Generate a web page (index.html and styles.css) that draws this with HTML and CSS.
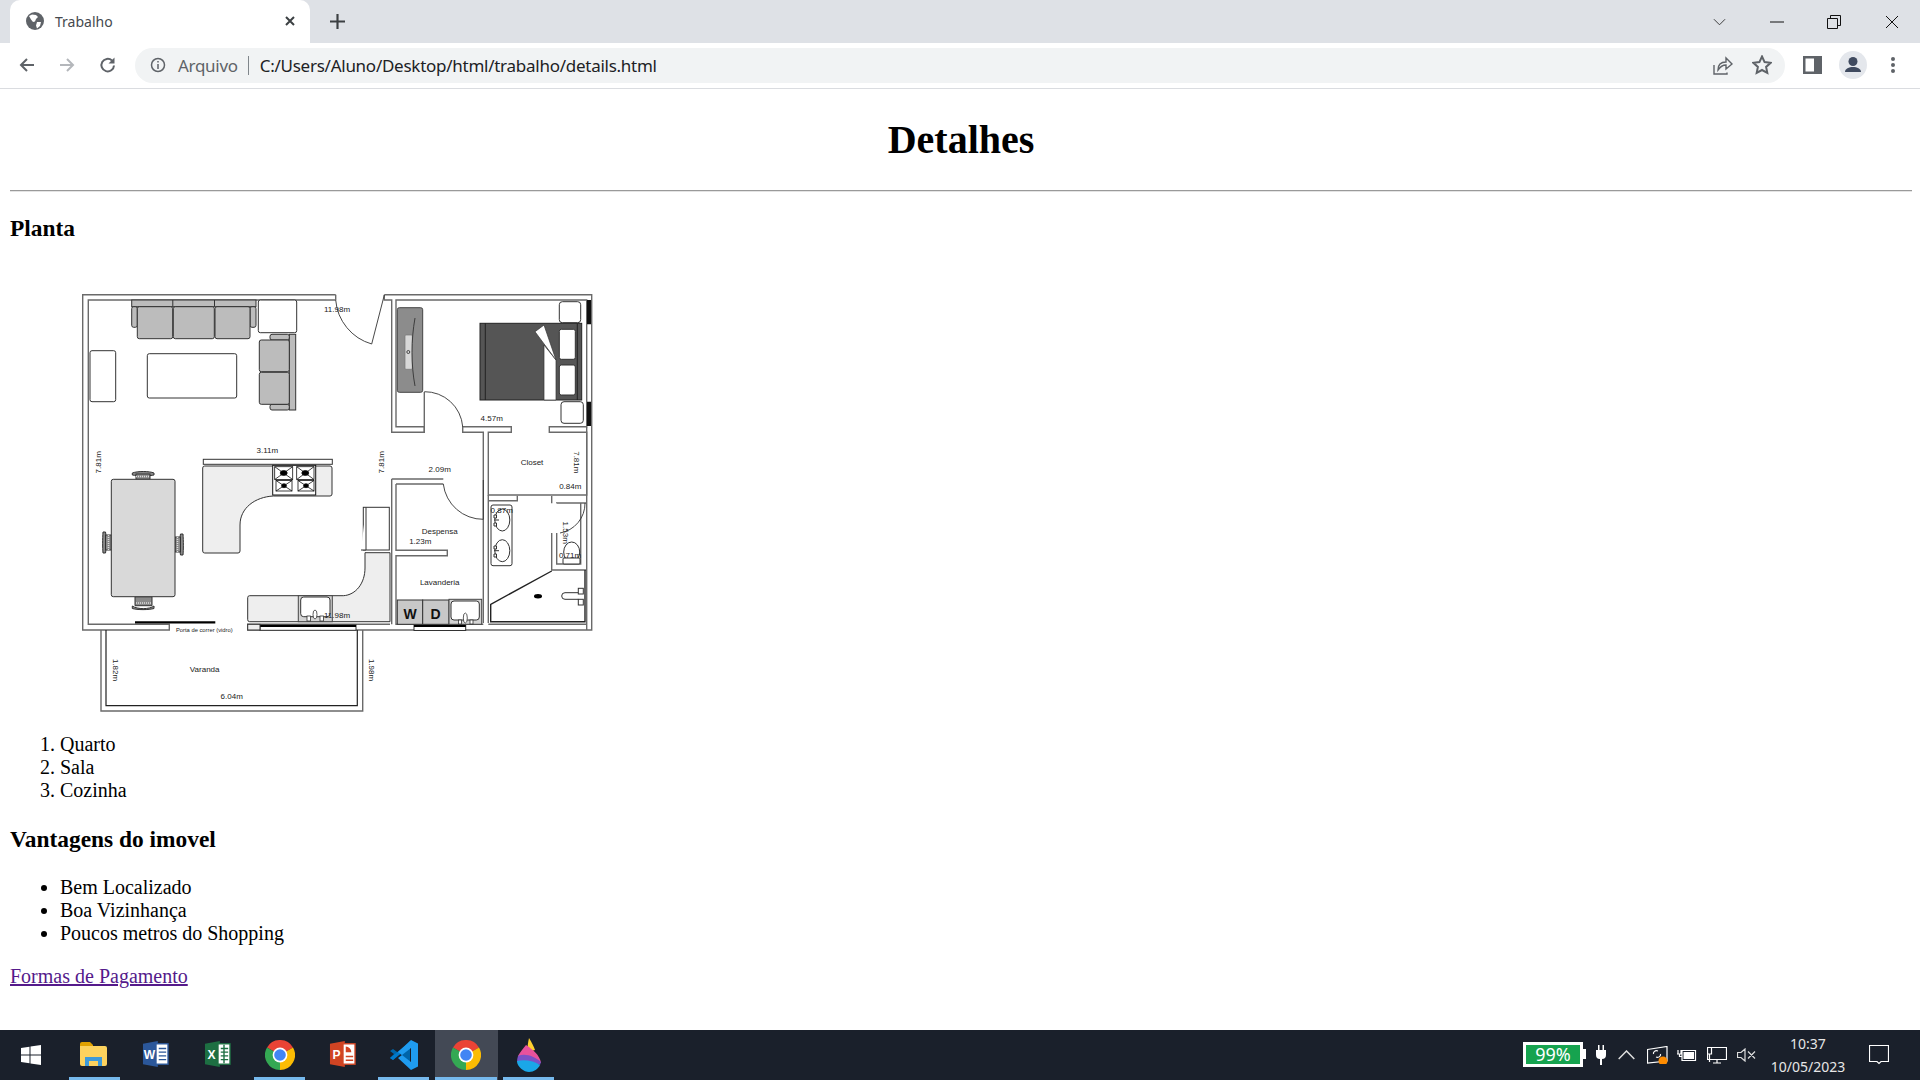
FILE: index.html
```html
<!DOCTYPE html>
<html lang="pt">
<head>
<meta charset="utf-8">
<title>Trabalho</title>
<link rel="stylesheet" href="styles.css">
</head>
<body>
<svg class="defs" width="0" height="0" aria-hidden="true">
  <symbol id="chrome" viewBox="0 0 30 30">
    <path fill="#ea4335" d="M15 15L2 7.5A15 15 0 0 1 28 7.5Z"/>
    <path fill="#fbbc04" d="M15 15L28 7.5A15 15 0 0 1 15 30Z"/>
    <path fill="#34a853" d="M15 15L15 30A15 15 0 0 1 2 7.5Z"/>
    <circle cx="15" cy="15" r="7.4" fill="#fff"/>
    <circle cx="15" cy="15" r="5.8" fill="#4285f4"/>
  </symbol>
</svg>

<header class="chrome">
  <div class="tabstrip">
    <div class="tab">
      <svg class="globe" viewBox="0 0 18 18"><circle cx="9" cy="9" r="9" fill="#5f6368"/><path fill="#fff" d="M3 4l3-1.5 4 .5 2 2-2 2-1 2.500-2 .5L5 7.500zM11 10h4l-1 4-3 2.500-1-3z"/></svg>
      <span class="tab-title">Trabalho</span>
      <svg class="tab-close" viewBox="0 0 12 12"><path d="M2 2l8 8M10 2l-8 8"/></svg>
    </div>
    <svg class="newtab" viewBox="0 0 14 14"><path d="M7 0v14M0 7h14"/></svg>
    <div class="winctl">
      <svg class="wc wc-chev" viewBox="0 0 14 8"><path d="M1 1l6 6 6-6"/></svg>
      <svg class="wc wc-min" viewBox="0 0 14 14"><path d="M0 7h14"/></svg>
      <svg class="wc wc-max" viewBox="0 0 14 14"><path d="M.5 3.500h10v10H.5zM3.500 3.500V.5h10v10h-3"/></svg>
      <svg class="wc wc-close" viewBox="0 0 14 14"><path d="M1 1l12 12M13 1L1 13"/></svg>
    </div>
  </div>
  <div class="toolbar">
    <svg class="nav nav-back" viewBox="0 0 18 18"><path d="M16 9H3M9 3L3 9l6 6"/></svg>
    <svg class="nav nav-fwd" viewBox="0 0 18 18"><path d="M2 9h13M9 3l6 6-6 6"/></svg>
    <svg class="nav nav-reload" viewBox="0 0 18 18"><path d="M15 9.500A6.300 6.300 0 1 1 13 4.500"/><path class="solid" d="M15.500 1.500v6h-6z"/></svg>
    <div class="omnibox">
      <svg class="info" viewBox="0 0 16 16"><circle cx="8" cy="8" r="6.500"/><path d="M8 7v5M8 4v1.600"/></svg>
      <span class="scheme">Arquivo</span>
      <span class="sep"></span>
      <span class="url">C:/Users/Aluno/Desktop/html/trabalho/details.html</span>
      <svg class="omni-act act-share" viewBox="0 0 20 20"><path d="M1 10v9h13v-1.500M5 15c0-5 3-8 8-8V3l6 6-6 5v-4c-3 0-6 2-8 5z"/></svg>
      <svg class="omni-act act-star" viewBox="0 0 20 20"><path d="M10 1.500l2.600 5.600 6 .7-4.500 4.100 1.200 6L10 15l-5.300 2.900 1.200-6L1.400 7.800l6-.7z"/></svg>
    </div>
    <svg class="panel" viewBox="0 0 19 18"><rect width="19" height="18" fill="#5f6368"/><rect x="2.500" y="2.500" width="8.500" height="13" fill="#fff"/></svg>
    <svg class="avatar" viewBox="0 0 28 28"><circle cx="14" cy="14" r="14" fill="#e4e7ec"/><circle cx="14" cy="10.500" r="4.500" fill="#3f4a5f"/><path fill="#3f4a5f" d="M6 21c0-3.500 4-5 8-5s8 1.500 8 5z"/></svg>
    <svg class="menu" viewBox="0 0 6 18"><circle cx="3" cy="3" r="2"/><circle cx="3" cy="9" r="2"/><circle cx="3" cy="15" r="2"/></svg>
  </div>
</header>

<main class="page">
  <h1>Detalhes</h1>
  <hr>
  <h3>Planta</h3>
  <svg class="plan" viewBox="10 265 620 448" role="img" aria-label="Planta do apartamento">
    <!-- walls -->
    <g class="wall">
      <path d="M335.700 294.700H82.700V630H169.300V624.300H88.300V300H335.700"/>
      <path d="M335.700 294.700V300"/>
      <path d="M384.300 294.700H591.700V630H247.700V624.300H390"/>
      <path d="M384.300 294.700V300H391.700V432.300H424.300V426.700H396V300H586.700V426.700H549.300V432.300H586.700V495H488.300V432.300H511.300V426.700H462.700V432.300H483.300V623"/>
      <path d="M424.300 392V432.300"/>
      <path d="M391.700 479H443.300M396 484H443.300M391.700 479V624.300M396 484V550.300H447.300V555.700H396V624.300H483.300"/>
      <path d="M488.300 495V500.700H517.300V495.700M488.300 500.700V623M488.300 624.300H586"/>
      <path d="M586.700 495V503H556.700V503.300M586.700 503V570M551.700 496V503.300M551.700 533V570H586M586.700 426.700V630"/>
      <path d="M556.700 533V564H580.700V503"/>
    </g>
    <path class="thin" d="M384.300 295L371.700 344A50 50 0 0 1 335.700 300"/>
    <path class="thin" d="M424.300 391.700A38 38 0 0 1 462.700 426.700"/>
    <path class="thin" d="M443.300 484A40 40 0 0 0 483.300 519.300V480"/>
    <path class="thin" d="M585 503A30 30 0 0 1 560 533"/>

    <!-- balcony -->
    <g class="wall">
      <path d="M101 630V711H362.700V630"/>
    </g>
    <path class="black" d="M106 630V705.700H357.300V630"/>
    <path class="black thick" d="M135 622.300H215.300"/>
    <rect class="black-box" x="260" y="624.800" width="96" height="5.500"/>
    <path class="black thick" d="M260 626H356"/>
    <rect class="black-box" x="414" y="625" width="51.700" height="5.500"/>
    <path class="black thick" d="M414 626H465.700"/>
    <path class="wall-solid" d="M587 300h4v24.300h-4zM587 401.700h4V426h-4z"/>

    <!-- sofa -->
    <g class="furn grey">
      <rect x="131.700" y="300" width="124.300" height="6.700"/>
      <path d="M172.800 300v6.700M214.500 300v6.700"/>
      <rect x="131.700" y="306.700" width="5.600" height="20.600" rx="2"/>
      <rect x="250" y="306.700" width="6" height="20.600" rx="2"/>
      <rect x="137.300" y="306.700" width="35.400" height="32" rx="2"/>
      <rect x="173.300" y="306.700" width="41" height="32" rx="2"/>
      <rect x="215" y="306.700" width="35" height="32" rx="2"/>
      <rect x="289.300" y="334.300" width="6.400" height="75.700"/>
      <rect x="270" y="334.300" width="19.300" height="5.700" rx="2"/>
      <rect x="270" y="404.300" width="19.300" height="5.700" rx="2"/>
      <rect x="259.300" y="340" width="30" height="31.700" rx="2"/>
      <rect x="259.300" y="372.300" width="30" height="32" rx="2"/>
    </g>
    <g class="furn white">
      <rect x="258.300" y="300" width="38.400" height="32.700" rx="2"/>
      <rect x="90" y="350.700" width="25.700" height="51" rx="2"/>
      <rect x="147.300" y="353.700" width="89.400" height="44.300" rx="2"/>
      <rect x="559.300" y="301.700" width="21.400" height="21" rx="3"/>
      <rect x="561" y="401.700" width="22.300" height="21.600" rx="3"/>
    </g>

    <!-- kitchen -->
    <rect class="furn white" x="203.300" y="459.300" width="129" height="5"/>
    <path class="furn light" d="M204.700 466H330a2 2 0 0 1 2 2V494a2 2 0 0 1-2 2H273.300C255 497 240 508 240 525V551a2 2 0 0 1-2 2H204.700a2 2 0 0 1-2-2V468a2 2 0 0 1 2-2Z"/>
    <rect class="stove" x="272.700" y="465.300" width="43" height="29.700"/>
    <g class="burner">
      <rect x="274.700" y="466.700" width="18" height="12.800"/><path d="M274.700 466.700l18 12.800M292.700 466.700l-18 12.800"/><ellipse cx="283.700" cy="473" rx="3.500" ry="2.500"/>
      <rect x="296.700" y="466.700" width="17.300" height="12.800"/><path d="M296.700 466.700l17.300 12.800M314 466.700l-17.300 12.800"/><ellipse cx="305.300" cy="473" rx="3.500" ry="2.500"/>
      <rect x="276" y="480.500" width="16" height="10.500"/><path d="M276 480.500l16 10.500M292 480.500l-16 10.500"/><ellipse cx="284" cy="485.700" rx="2.500" ry="2"/>
      <rect x="298" y="480.500" width="16" height="10.500"/><path d="M298 480.500l16 10.500M314 480.500l-16 10.500"/><ellipse cx="306" cy="485.700" rx="2.500" ry="2"/>
    </g>
    <path class="furn light" d="M249.700 595.700H343.300C356 595 365 583 365 568V552.700H390V621.700H249.700a2 2 0 0 1-2-2V597.700a2 2 0 0 1 2-2Z"/>
    <rect class="furn light" x="247.700" y="624.300" width="12.300" height="5.700"/>
    <rect class="sink" x="298.300" y="595.700" width="34" height="26"/>
    <rect class="furn white" x="300.700" y="597" width="29.300" height="19.700" rx="3"/>
    <g class="fixture">
      <rect x="307" y="616" width="3.500" height="5"/><rect x="320" y="616" width="3.500" height="5"/>
      <ellipse cx="315" cy="614.500" rx="2" ry="4.500"/>
    </g>
    <g class="furn white">
      <rect x="363.300" y="507.300" width="26" height="42.700"/>
      <path d="M366 507.300V550H361"/>
    </g>

    <!-- table -->
    <g class="furn grey2">
      <path d="M132.300 473c5-2 17-2 21.700 0v2c-4 1-17 1-21.700 0Z"/>
      <rect x="136" y="474" width="14" height="5.300"/>
      <path d="M132.300 606c5 3.500 17 3.500 21.700 0v2.500c-5 1.500-17 1.500-21.700 0Z"/>
      <path d="M135 596.700h17v9h-17Z"/>
      <path d="M103 532c-.5 7-.5 16 0 21h2.500c1-5 1-16 0-21Z"/>
      <rect x="105.500" y="535" width="5.800" height="15"/>
      <path d="M183 534c.5 7 .5 16 0 21h-2.500c-1-5-1-16 0-21Z"/>
      <rect x="175" y="537" width="5.500" height="15"/>
    </g>
    <g class="stripes">
      <path d="M136 476.500H150M136 603H151M108.500 535V550M177.500 537V552"/>
    </g>
    <rect class="furn table" x="111.300" y="479.300" width="63.700" height="117.400" rx="2"/>

    <!-- bedroom -->
    <rect class="bed" x="480" y="323.300" width="101.700" height="76.700"/>
    <path class="bed-edge" d="M485.300 323.300V400M577.300 323.300V400"/>
    <path class="sheet" d="M544 400H556V360L544 345Z"/>
    <path class="sheet" d="M535 331.700L544 325L556 360Z"/>
    <g class="furn white">
      <rect x="559.300" y="329.300" width="16" height="30" rx="2"/>
      <rect x="559.300" y="365" width="16" height="30" rx="2"/>
    </g>
    <rect class="cabinet" x="397.300" y="307.700" width="25.400" height="84.600" rx="2"/>
    <rect class="tv" x="405" y="335" width="7.300" height="34.300" rx="1"/>
    <path class="thin" d="M415 318C411 340 411 365 415 386"/>
    <circle class="thin" cx="408.300" cy="352" r="1.500"/>

    <!-- laundry -->
    <rect class="appliance" x="397.300" y="600" width="25.400" height="24.300"/>
    <rect class="appliance" x="422.700" y="600" width="26.300" height="24.300"/>
    <text class="wd" x="410" y="618.500">W</text>
    <text class="wd" x="435.500" y="618.500">D</text>
    <rect class="sink" x="449" y="599.300" width="32.700" height="25"/>
    <rect class="furn white" x="451" y="601" width="28.300" height="19" rx="3"/>
    <g class="fixture">
      <rect x="458.500" y="620" width="3" height="4"/><rect x="470" y="620" width="3" height="4"/>
      <ellipse cx="465.300" cy="618" rx="2" ry="5"/>
    </g>

    <!-- bath -->
    <rect class="furn white" x="491" y="505" width="21" height="60.700" rx="2"/>
    <g class="furn white">
      <ellipse cx="502.300" cy="520" rx="7.500" ry="11"/>
      <ellipse cx="502.300" cy="550.700" rx="7.500" ry="11"/>
      <path d="M494 520h5M494 550.700h5M494 515h2.500v3h-2.500zM494 523h2.500v3h-2.500zM494 546h2.500v3h-2.500zM494 554h2.500v3h-2.500z"/>
    </g>
    <g class="furn white">
      <ellipse cx="571.700" cy="552" rx="8" ry="10"/>
      <rect x="563" y="558" width="17" height="6" rx="1"/>
    </g>
    <path class="shower" d="M551.700 571L490.700 604.300V621.700H585V570"/>
    <ellipse class="drain" cx="538" cy="596.300" rx="4" ry="2.200"/>
    <g class="furn white">
      <path d="M578.300 592.700H565a3.300 3.300 0 0 0 0 6.600H578.300"/>
      <rect x="578.300" y="588.300" width="5" height="5.700"/>
      <rect x="578.300" y="599.300" width="5" height="5.700"/>
    </g>

    <!-- labels -->
    <g class="label">
      <text x="337" y="312">11.98m</text>
      <text x="267.300" y="453">3.11m</text>
      <text x="491.700" y="420.500">4.57m</text>
      <text x="439.700" y="472">2.09m</text>
      <text x="532" y="465">Closet</text>
      <text x="570.300" y="489">0.84m</text>
      <text x="501.700" y="513">0.87m</text>
      <text x="570" y="558">0.71m</text>
      <text x="439.700" y="534">Despensa</text>
      <text x="420.300" y="544">1.23m</text>
      <text x="439.700" y="585">Lavanderia</text>
      <text x="337" y="618">11.98m</text>
      <text x="204.700" y="672">Varanda</text>
      <text x="231.700" y="699">6.04m</text>
      <text class="tiny" x="204.300" y="631.500">Porta de correr (vidro)</text>
      <text transform="rotate(-90 98.300 462.300)" x="98.300" y="465">7.81m</text>
      <text transform="rotate(-90 381.700 462.300)" x="381.700" y="465">7.81m</text>
      <text transform="rotate(90 576.700 462.300)" x="576.700" y="465">7.81m</text>
      <text transform="rotate(90 115 670)" x="115" y="672.500">1.82m</text>
      <text transform="rotate(90 371 670)" x="371" y="672.500">1.98m</text>
      <text transform="rotate(90 565.700 532.700)" x="565.700" y="535">1.53m</text>
    </g>
  </svg>

  <ol>
    <li>Quarto</li>
    <li>Sala</li>
    <li>Cozinha</li>
  </ol>
  <h3>Vantagens do imovel</h3>
  <ul>
    <li>Bem Localizado</li>
    <li>Boa Vizinhança</li>
    <li>Poucos metros do Shopping</li>
  </ul>
  <p><a href="#pagamento">Formas de Pagamento</a></p>
</main>

<footer class="taskbar">
  <div class="task">
    <svg class="ic ic-win" viewBox="0 0 20 20"><path fill="#fff" d="M0 3l8.500-1.200v7.700H0zM9.500 1.600L20 0v9.500H9.500zM0 10.500h8.500v7.700L0 17zM9.500 10.500H20V20L9.500 18.400z"/></svg>
  </div>
  <div class="task open split">
    <svg class="ic ic-27" viewBox="0 0 27 24"><path fill="#e0a100" d="M0 2a2 2 0 0 1 2-2h8l3 3v4H0z"/><path fill="#fcd25e" d="M0 4h25a2 2 0 0 1 2 2v16a2 2 0 0 1-2 2H2a2 2 0 0 1-2-2z"/><path fill="#3d9ad9" d="M5 24v-9h17v9h-4v-5H9v5z"/></svg>
  </div>
  <div class="task">
    <svg class="ic ic-27" viewBox="0 0 27 28"><path fill="#2b579a" d="M0 3l16-3v28L0 25z"/><rect x="14" y="3" width="13" height="22" fill="#fff" stroke="#2b579a" stroke-width="1.500"/><path stroke="#2b579a" stroke-width="1.500" d="M17 8h8M17 12h8M17 16h8M17 20h8"/><text class="ic-letter" x="7" y="19">W</text></svg>
  </div>
  <div class="task">
    <svg class="ic ic-27" viewBox="0 0 27 28"><path fill="#1d6f42" d="M0 3l16-3v28L0 25z"/><rect x="14" y="3" width="13" height="22" fill="#fff" stroke="#1d6f42" stroke-width="1.500"/><path stroke="#1d6f42" stroke-width="1.500" d="M17 8h8M17 12h8M17 16h8M17 20h8M20.500 4v20"/><text class="ic-letter" x="7" y="19">X</text></svg>
  </div>
  <div class="task open">
    <svg class="ic ic-30"><use href="#chrome"/></svg>
  </div>
  <div class="task">
    <svg class="ic ic-27" viewBox="0 0 27 28"><path fill="#d04423" d="M0 3l16-3v28L0 25z"/><rect x="14" y="3" width="13" height="22" fill="#fff" stroke="#d04423" stroke-width="1.500"/><path fill="#d04423" d="M17 6a6 6 0 0 1 6 6h-6zM17 16h8v1.500h-8zM17 20h8v1.500h-8z"/><text class="ic-letter" x="7" y="19">P</text></svg>
  </div>
  <div class="task open">
    <svg class="ic ic-30" viewBox="0 0 30 30"><path fill="#0065a9" d="M1 11l3-2 7 5 -7 6 -3-2 4-4zM21 1l-10 13 10 8z"/><path fill="#007acc" d="M1 18l3 2L22 5V1z"/><path fill="#1f9cf0" d="M22 0l7 3.500v23L22 30l-13-12 4-3 9 7V8l-9 7-4-3z"/></svg>
  </div>
  <div class="task open active">
    <svg class="ic ic-30"><use href="#chrome"/></svg>
  </div>
  <div class="task open">
    <svg class="ic ic-drop" viewBox="0 0 24 34"><path fill="#ffd02f" d="M12 0c3 5 5 9 6 12l-7 2c-1-5 0-9 1-14z"/><path fill="#e8529c" d="M9 7c6 4 14 10 15 18L1 18c2-4 5-7 8-11z"/><path fill="#7a52c7" d="M1 18c7-3 16 0 23 6l-1 3C15 23 7 23 0 24c0-2 .4-4 1-6z"/><path fill="#1aa7e8" d="M0 23c8-2 17 0 23 4-2 4-6 7-11 7S0 29 0 23z"/></svg>
  </div>
  <div class="tray">
    <div class="battery"><span class="batt-fill">99%</span></div>
    <span class="batt-nub"></span>
    <svg class="tr tr-plug" viewBox="0 0 10 20"><path fill="#fff" d="M2 0h1.500v5H6.500V0H8v5h2v5a4 4 0 0 1-4 4v6H4v-6a4 4 0 0 1-4-4V5h2z"/></svg>
    <svg class="tr tr-chev" viewBox="0 0 17 10"><path d="M.7 9l7.800-8 7.800 8"/></svg>
    <svg class="tr tr-mon" viewBox="0 0 21 18"><path d="M.5 3.500L20 .5V15L.5 17z"/><path d="M11 5c-3-1-5 1-4.500 3M9 11c3 1 5-1 4.500-3"/><circle class="dot" cx="16" cy="15" r="4.500"/></svg>
    <svg class="tr tr-batt" viewBox="0 0 20 14"><path d="M1 2v4M4 2v4M0 6h5M2.500 6v2.500h2M5 2.500h13.500v10H5z"/><rect class="solid" x="6.500" y="4" width="10.500" height="7"/></svg>
    <svg class="tr tr-net" viewBox="0 0 20 17"><path d="M.5 .5H19.500V12.500H.5zM10 12.500V16M6 16h8"/><rect class="bg" x="0" y="0" width="5" height="7"/><path d="M.5 .5h4v6.500h-4zM2.500 7v8"/></svg>
    <svg class="tr tr-mute" viewBox="0 0 19 14"><path d="M.5 4.500H4L8 1V13L4 9.500H.5zM11 3.500l7 7M18 3.500l-7 7"/></svg>
    <div class="clock"><span>10:37</span><span>10/05/2023</span></div>
    <svg class="tr tr-note" viewBox="0 0 20 20"><path d="M.5 .5H19.500V16.500H12L10 18.500 8 16.500H.5z"/></svg>
  </div>
</footer>
</body>
</html>
```

FILE: styles.css
```css
* { box-sizing: border-box; }
html, body { height: 100%; }
body {
  margin: 0;
  display: flex;
  flex-direction: column;
  height: 1080px;
  overflow: hidden;
  background: #fff;
  color: #000;
  font-family: "Liberation Serif", serif;
  font-size: 20px;
}
.defs { position: absolute; }

/* browser chrome */
.chrome { flex: none; font-family: "Noto Sans", sans-serif; }
.tabstrip {
  height: 43px;
  background: #dee1e6;
  display: flex;
  align-items: center;
  padding-left: 10px;
}
.tab {
  width: 300px;
  height: 43px;
  background: #fff;
  border-radius: 10px 10px 0 0;
  display: flex;
  align-items: center;
  padding: 0 14px 1px 16px;
}
.globe { width: 18px; height: 18px; flex: none; }
.tab-title { margin-left: 11px; font-size: 14px; color: #45494e; flex: 1; }
.tab-close { width: 12px; height: 12px; fill: none; stroke: #3c4043; stroke-width: 2; }
.newtab { width: 15px; height: 15px; margin-left: 20px; fill: none; stroke: #3c4043; stroke-width: 2; }
.winctl { margin-left: auto; display: flex; align-items: center; }
.wc { fill: none; stroke: #111; stroke-width: 1; }
.wc-chev { width: 13px; height: 8px; margin-right: 44px; stroke: #333; }
.wc-min { width: 14px; height: 14px; margin-right: 43px; }
.wc-max { width: 14px; height: 14px; margin-right: 44px; stroke: #111; }
.wc-close { width: 14px; height: 14px; margin-right: 21px; }

.toolbar {
  height: 46px;
  border-bottom: 1px solid #dadce0;
  background: #fff;
  display: flex;
  align-items: center;
  padding: 0 0 1px 18px;
}
.nav { width: 18px; height: 18px; fill: none; stroke-width: 2; flex: none; }
.nav-back { stroke: #5f6368; }
.nav-fwd { stroke: #b4b7bb; margin-left: 22px; }
.nav-reload { stroke: #5f6368; margin-left: 23px; }
.nav-reload .solid { fill: #5f6368; stroke: none; }
.omnibox {
  margin-left: 18px;
  width: 1650px;
  height: 35px;
  background: #f1f3f4;
  border-radius: 18px;
  display: flex;
  align-items: center;
  padding: 0 13px 0 15px;
}
.info { width: 16px; height: 16px; fill: none; stroke: #5f6368; stroke-width: 1.5; flex: none; }
.scheme { margin-left: 12px; font-size: 17px; color: #5f6368; letter-spacing: -.3px; }
.sep { width: 1px; height: 19px; background: #80868b; margin: 0 11px 0 10px; }
.url { font-size: 17px; color: #202124; flex: 1; letter-spacing: -.26px; }
.omni-act { width: 20px; height: 20px; fill: none; stroke: #5f6368; stroke-width: 1.400; flex: none; }
.act-star { margin-left: 19px; stroke-width: 2; }
.panel { width: 19px; height: 18px; margin-left: 18px; flex: none; }
.avatar { width: 28px; height: 28px; margin-left: 17px; flex: none; }
.menu { width: 6px; height: 18px; margin-left: 23px; fill: #5f6368; flex: none; }

/* document */
.page {
  flex: 1;
  min-height: 0;
  overflow: hidden;
  padding: 0 8px 0 10px;
}
h1 { font-size: 40px; margin: 27.800px 0 26.800px; text-align: center; line-height: 46px; }
hr {
  margin: 0;
  height: 2px;
  border: 0;
  border-top: 1px solid #9a9a9a;
  border-bottom: 1px solid #e4e4e4;
}
h3 { font-size: 23.400px; margin: 23.400px 0; line-height: 27px; }
.plan { display: block; width: 620px; height: 448px; }
ol, ul { margin: 20px 0; padding-left: 50px; line-height: 23px; }
p { margin: 20px 0; line-height: 23px; }
a { color: #551a8b; }

/* floor plan */
.wall { fill: none; stroke: #6a6a6a; stroke-width: 1.400; }
.thin { fill: none; stroke: #333; stroke-width: .9; }
.black { fill: none; stroke: #222; stroke-width: 1.200; }
.thick { stroke: #000; stroke-width: 2.200; }
.black-box { fill: #fff; stroke: #333; stroke-width: 1; }
.wall-solid { fill: #111; }
.furn { stroke: #333; stroke-width: 1; }
.grey { fill: #bcbcbc; }
.grey2 { fill: #8a8a8a; }
.white { fill: #fff; }
.light { fill: #eeeeee; }
.table { fill: #d9d9d9; }
.stripes { fill: none; stroke: #ddd; stroke-width: 1.500; stroke-dasharray: 1 1; }
.stove { fill: #fff; stroke: #111; stroke-width: 1; }
.burner { fill: #fff; stroke: #111; stroke-width: .8; }
.burner ellipse { fill: #000; }
.sink { fill: #d4d4d4; stroke: #444; stroke-width: 1; }
.fixture { fill: #fff; stroke: #333; stroke-width: .8; }
.bed { fill: #555; stroke: #222; stroke-width: 1; }
.bed-edge { fill: none; stroke: #222; stroke-width: 1; }
.sheet { fill: #fff; stroke: #333; stroke-width: .7; }
.cabinet { fill: #8c8c8c; stroke: #444; stroke-width: 1; }
.tv { fill: #d8d8d8; stroke: #777; stroke-width: .7; }
.appliance { fill: #c8c8c8; stroke: #333; stroke-width: 1; }
.wd { font: bold 14px "Liberation Sans", sans-serif; text-anchor: middle; fill: #111; }
.shower { fill: none; stroke: #222; stroke-width: 1.400; }
.drain { fill: #000; }
.label text {
  font: 8px "Liberation Sans", sans-serif;
  text-anchor: middle;
  fill: #222;
}
.label .tiny { font-size: 5.800px; }

/* taskbar */
.taskbar {
  flex: none;
  height: 50px;
  background: #1a202b;
  display: flex;
  font-family: "Noto Sans", sans-serif;
}
.task {
  width: 62.200px;
  height: 50px;
  position: relative;
  display: flex;
  align-items: center;
  justify-content: center;
}
.task.open::after {
  content: "";
  position: absolute;
  left: 5px;
  right: 6px;
  bottom: 0;
  height: 3px;
  background: #76b9ed;
}
.task.split::after { left: 7px; right: 4px; box-shadow: none; }
.task.active { background: #434955; }
.task.active::after { left: 0; right: 1px; }
.ic { display: block; overflow: visible; }
.ic-win { width: 20px; height: 20px; }
.ic-27 { width: 27px; height: 26px; margin-bottom: 2px; }
.ic-30 { width: 30px; height: 30px; }
.ic-drop { width: 24px; height: 34px; }
.ic-letter { font: bold 13px "Liberation Sans", sans-serif; fill: #fff; text-anchor: middle; }

.tray { margin-left: auto; display: flex; align-items: center; color: #fff; }
.battery {
  width: 60px;
  height: 25px;
  border: 3px solid #fff;
  background: #16a34f;
  display: flex;
  align-items: center;
  justify-content: center;
  margin-bottom: 2px;
}
.batt-fill { font-size: 18px; line-height: 1; color: #fff; }
.batt-nub { width: 3px; height: 10px; background: #fff; margin: 0 10px 2px 0; }
.tr { fill: none; stroke: #fff; stroke-width: 1.200; flex: none; }
.tr-plug { width: 10px; height: 20px; stroke: none; margin-right: 12px; }
.tr-chev { width: 17px; height: 10px; stroke: #ddd; stroke-width: 1.500; margin-right: 12px; }
.tr-mon { width: 21px; height: 18px; margin-right: 9px; }
.tr-mon .dot { fill: #ff8c00; stroke: none; }
.tr-batt { width: 20px; height: 14px; margin-right: 10px; }
.tr-batt .solid { fill: #fff; stroke: none; }
.tr-net { width: 20px; height: 17px; margin-right: 10px; }
.tr-net .bg { fill: #1a202b; stroke: none; }
.tr-mute { width: 19px; height: 14px; margin-right: 15px; stroke: #ddd; }
.clock {
  display: flex;
  flex-direction: column;
  align-items: center;
  font-size: 14px;
  line-height: 23px;
  color: #e6e6e6;
  width: 74px;
  margin-right: 24px;
}
.tr-note { width: 20px; height: 20px; margin-right: 31px; }
```
